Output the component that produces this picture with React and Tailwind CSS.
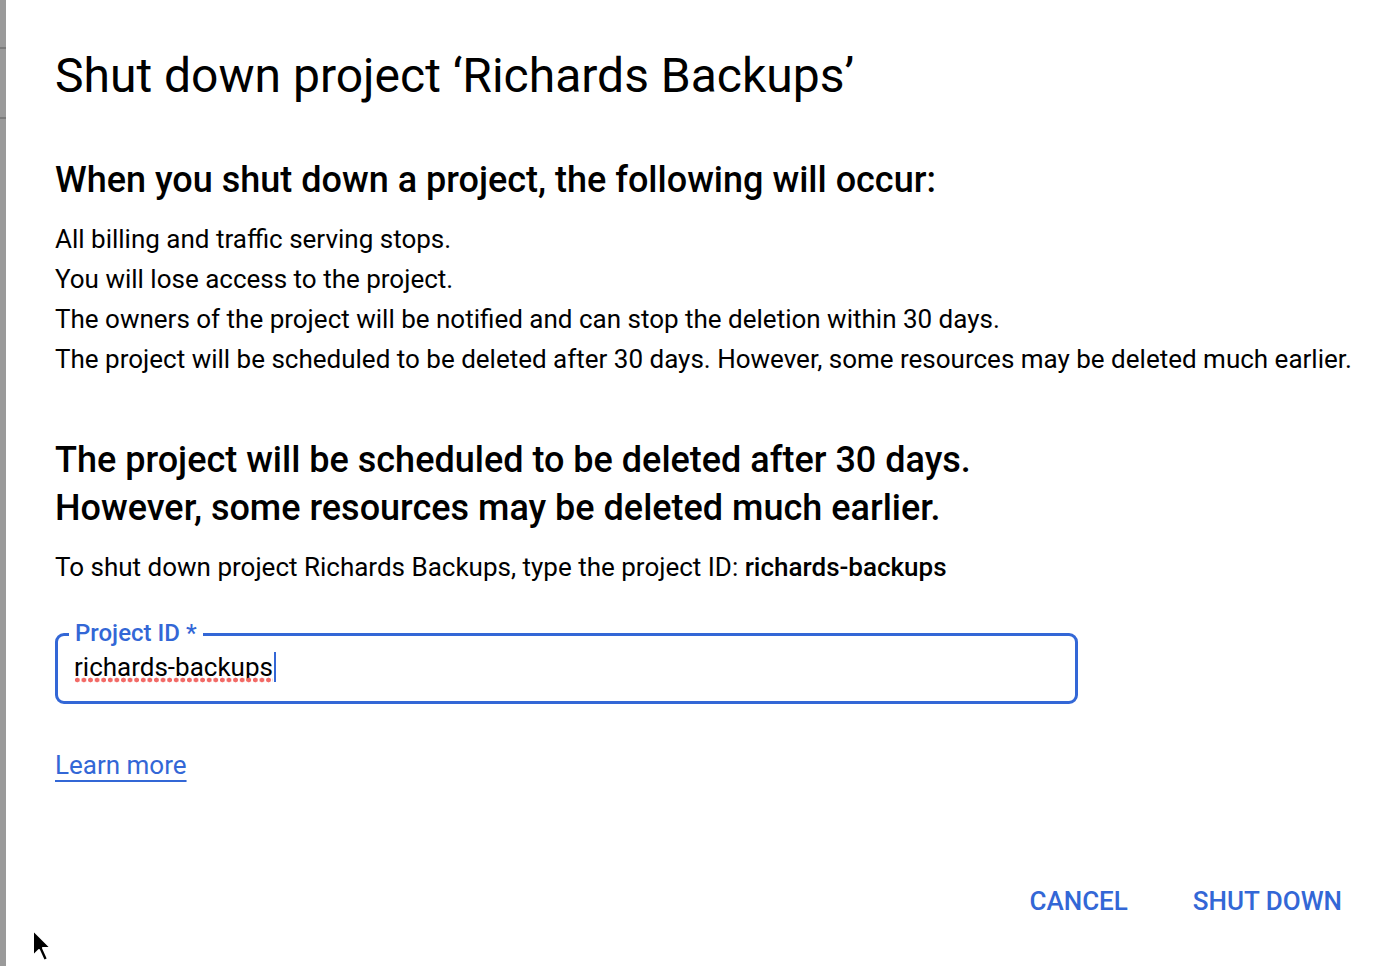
import React from 'react'

const blue = 'text-[#3367d6]'

const Cursor = () => (
  <svg className="absolute left-[30px] top-[928px]" width="24" height="36" viewBox="0 0 24 36">
    <path d="M3 2 L3 28 L9 22 L14 33 L18 31 L13 20 L21 20 Z" fill="#000" stroke="#fff" strokeWidth="2" strokeLinejoin="round" />
  </svg>
)

export default function App() {
  const points = [
    'All billing and traffic serving stops.',
    'You will lose access to the project.',
    'The owners of the project will be notified and can stop the deletion within 30 days.',
    'The project will be scheduled to be deleted after 30 days. However, some resources may be deleted much earlier.',
  ]

  return (
    <div className="relative flex h-[966px] w-[1394px] overflow-hidden bg-white font-['Roboto',sans-serif] text-black">
      {/* grey page edge behind the dialog */}
      <div className="flex w-[6px] flex-col bg-[#9a9a9a]">
        <div className="mt-[47px] h-[2px] bg-[#7c7c7c]" />
        <div className="mt-[68px] h-[2px] bg-[#7c7c7c]" />
      </div>

      <div className="flex flex-1 flex-col pl-[49px] pr-[30px]">
        <h1 className="mt-[48px] text-[48px] leading-[56px] font-normal">
          Shut down project ‘Richards Backups’
        </h1>

        <h2 className="mt-[52px] text-[36px] leading-[48px] font-medium">
          When you shut down a project, the following will occur:
        </h2>
        <div className="mt-[15px] text-[26px] leading-[40px]">
          {points.map((p) => (
            <div key={p}>{p}</div>
          ))}
        </div>

        <h2 className="mt-[57px] text-[36px] leading-[48px] font-medium">
          The project will be scheduled to be deleted after 30 days.
          <br />
          However, some resources may be deleted much earlier.
        </h2>
        <p className="mt-[15px] text-[26px] leading-[40px]">
          To shut down project Richards Backups, type the project ID: <span className="font-medium">richards-backups</span>
        </p>

        {/* project id field */}
        <div className="relative mt-[46px] flex h-[71px] w-[1023px] items-center rounded-[9px] border-[3px] border-[#3367d6] px-[16px] pb-[3px]">
          <span className={`absolute -top-[18px] left-[11px] bg-white px-[6px] text-[24px] leading-[30px] font-medium ${blue}`}>
            Project ID *
          </span>
          <span className="relative text-[26px] leading-[32px]">
            richards-backups
            <span className="absolute left-0 right-0 bottom-[0px] h-[6px] bg-[radial-gradient(circle,#f26a66_2.1px,transparent_2.7px)] bg-[length:6.6px_6px] bg-repeat-x" />
          </span>
          <span className="ml-[1px] h-[30px] w-[2px] bg-[#3367d6]" />
        </div>

        <a href="#" className={`mt-[45px] self-start text-[26px] leading-[32px] underline decoration-[2px] underline-offset-[6px] ${blue}`}>
          Learn more
        </a>

        <div className="mt-[104px] flex justify-end gap-[65px] pr-[22px]">
          <button className={`text-[26px] leading-[32px] font-medium ${blue}`}>CANCEL</button>
          <button className={`text-[26px] leading-[32px] font-medium ${blue}`}>SHUT DOWN</button>
        </div>
      </div>

      <Cursor />
    </div>
  )
}
